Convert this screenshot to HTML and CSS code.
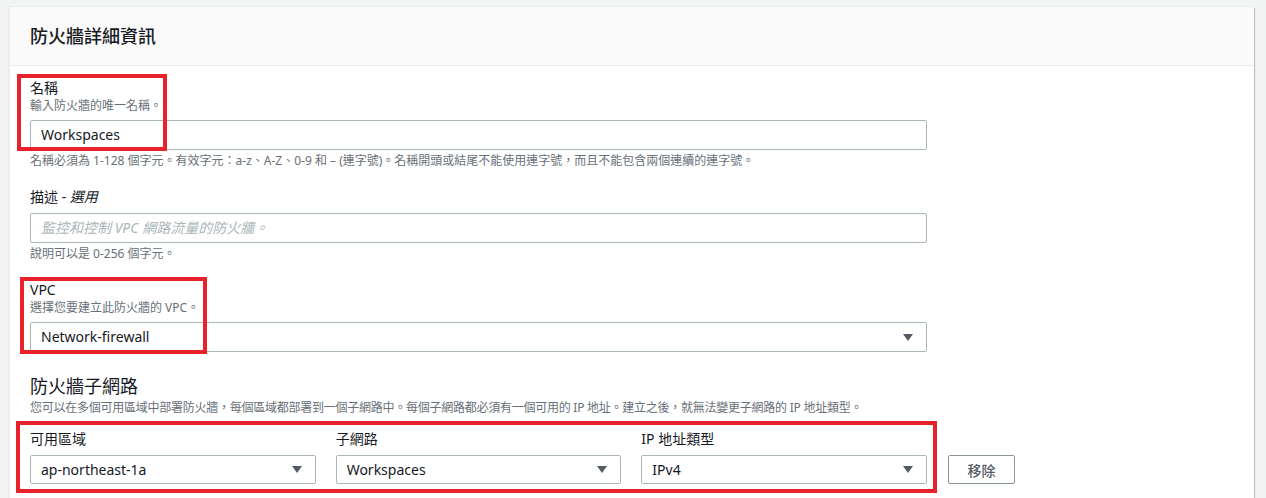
FILE: index.html
```html
<!DOCTYPE html>
<html lang="zh-Hant">
<head>
    <meta charset="UTF-8">
    <meta name="viewport" content="width=device-width, initial-scale=1.0">
    <title>防火牆詳細資訊</title>
    <link rel="stylesheet" href="styles.css">
</head>
<body>

    <div class="card">
        <div class="card-header">
            <h2>防火牆詳細資訊</h2>
        </div>

        <div class="card-body">
            <div class="field">
                <label class="label">名稱</label>
                <div class="desc">輸入防火牆的唯一名稱。</div>
                <div class="input">Workspaces</div>
                <div class="help">名稱必須為 1-128 個字元。有效字元：a-z、A-Z、0-9 和 – (連字號)。名稱開頭或結尾不能使用連字號，而且不能包含兩個連續的連字號。</div>
            </div>

            <div class="field">
                <label class="label">描述 - <i>選用</i></label>
                <div class="input placeholder">監控和控制 VPC 網路流量的防火牆。</div>
                <div class="help">說明可以是 0-256 個字元。</div>
            </div>

            <div class="field">
                <label class="label">VPC</label>
                <div class="desc">選擇您要建立此防火牆的 VPC。</div>
                <div class="input select">Network-firewall <span class="caret"></span></div>
            </div>

            <!-- Subnet mapping -->
            <h3 class="section-title">防火牆子網路</h3>
            <div class="section-desc">您可以在多個可用區域中部署防火牆，每個區域都部署到一個子網路中。每個子網路都必須有一個可用的 IP 地址。建立之後，就無法變更子網路的 IP 地址類型。</div>

            <div class="subnet-row">
                <div class="subnet-fields">
                    <div>
                        <label class="label">可用區域</label>
                        <div class="input select">ap-northeast-1a <span class="caret"></span></div>
                    </div>
                    <div>
                        <label class="label">子網路</label>
                        <div class="input select">Workspaces <span class="caret"></span></div>
                    </div>
                    <div>
                        <label class="label">IP 地址類型</label>
                        <div class="input select">IPv4 <span class="caret"></span></div>
                    </div>
                </div>
                <button class="button">移除</button>
            </div>
        </div>
    </div>

    <!-- annotation boxes -->
    <div class="mark mark-name"></div>
    <div class="mark mark-vpc"></div>
    <div class="mark mark-subnet"></div>

</body>
</html>
```

FILE: styles.css
```css
body {
    margin: 0;
    padding: 7px 12px 0 9px;
    background: #f2f3f3;
    font-family: "Noto Sans", "Noto Sans CJK TC", sans-serif;
    color: #16191f;
    position: relative;
    height: 491px;
    overflow: hidden;
}
.card {
    background: #fff;
    border-left: 1px solid #eaeded;
    box-shadow: 1px 1px 1px 0 rgba(0, 28, 36, 0.2), 0 0 1px 0 rgba(0, 28, 36, 0.15);
    height: 491px;
}
.card-header {
    background: #fafafa;
    border-bottom: 1px solid #eaeded;
    height: 58px;
    display: flex;
    align-items: center;
    padding-left: 20px;
}
.card-header h2 {
    margin: 0;
    font-size: 18px;
    font-weight: 500;
    line-height: 24px;
}
.card-body {
    padding: 12px 20px 0 20px;
}
.field {
    width: 897px;
    margin-bottom: 18px;
}
.label {
    display: block;
    font-size: 14px;
    line-height: 20px;
}
.label i {
    font-style: italic;
}
.desc {
    font-size: 12px;
    line-height: 16px;
    color: #687078;
}
.input {
    box-sizing: border-box;
    margin-top: 6px;
    height: 30px;
    border: 1px solid #aab7b8;
    border-radius: 2px;
    padding: 0 10px;
    font-size: 14px;
    line-height: 28px;
    white-space: nowrap;
    position: relative;
}
.placeholder {
    color: #aab7b8;
    font-style: italic;
}
.select {
    padding-right: 30px;
}
.caret {
    position: absolute;
    right: 13px;
    top: 11px;
    width: 0;
    height: 0;
    border-left: 5px solid transparent;
    border-right: 5px solid transparent;
    border-top: 7px solid #545b64;
}
.help {
    margin-top: 3px;
    font-size: 12px;
    line-height: 16px;
    color: #687078;
    white-space: nowrap;
}
.section-title {
    margin: 22px 0 0 0;
    font-size: 18px;
    font-weight: 400;
    line-height: 24px;
}
.section-desc {
    margin-top: 2px;
    font-size: 12px;
    line-height: 16px;
    color: #687078;
    letter-spacing: -0.25px;
}
.subnet-row {
    display: flex;
    align-items: flex-end;
    margin-top: 13px;
}
.subnet-fields {
    width: 897px;
    display: grid;
    grid-template-columns: 1fr 1fr 1fr;
    gap: 20px;
}
.subnet-fields .input {
    height: 29px;
    line-height: 27px;
}
.subnet-fields .caret {
    top: 10px;
}
.button {
    margin-left: 21px;
    width: 67px;
    height: 29px;
    background: #fff;
    border: 1px solid #879596;
    border-radius: 2px;
    color: #545b64;
    font-family: "Noto Sans", "Noto Sans CJK TC", sans-serif;
    font-size: 14px;
    font-weight: 500;
    padding: 0;
}
.mark {
    position: absolute;
    border: 4px solid #e8212b;
    box-sizing: border-box;
}
.mark-name {
    left: 17px;
    top: 74px;
    width: 150px;
    height: 77px;
}
.mark-vpc {
    left: 20px;
    top: 277px;
    width: 187px;
    height: 77px;
}
.mark-subnet {
    left: 16px;
    top: 421px;
    width: 921px;
    height: 72px;
}
```
